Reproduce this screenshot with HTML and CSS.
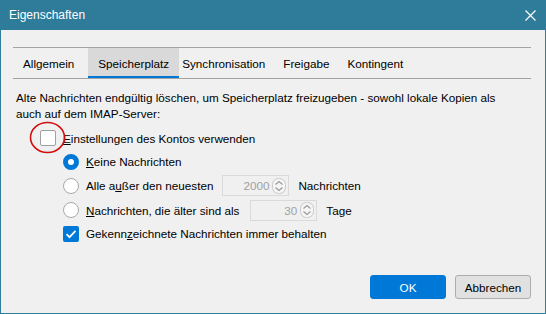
FILE: index.html
```html
<!DOCTYPE html>
<html lang="de">
  <head>
    <meta charset="UTF-8" />
    <title>Eigenschaften</title>
    <link rel="stylesheet" href="styles.css">
  </head>
  <body>
    <div class="window">
      <div class="titlebar">
        <span class="title">Eigenschaften</span>
        <svg class="close" width="11" height="11" viewBox="0 0 11 11">
          <path d="M0.5 0.5 L10.5 10.5 M10.5 0.5 L0.5 10.5" stroke="#fff" stroke-width="1.2" fill="none" />
        </svg>
      </div>
      <div class="content">
        <div class="tabs">
          <div class="tab">Allgemein</div>
          <div class="tab active">Speicherplatz</div>
          <div class="tab">Synchronisation</div>
          <div class="tab">Freigabe</div>
          <div class="tab">Kontingent</div>
        </div>

        <p class="desc">Alte Nachrichten endgültig löschen, um Speicherplatz freizugeben - sowohl lokale Kopien als<br>auch auf dem IMAP-Server:</p>

        <div class="options">
          <div class="row row-account">
            <span class="checkbox"></span>
            <span class="label"><u>E</u>instellungen des Kontos verwenden</span>
            <svg class="marker" width="37" height="33" viewBox="0 0 37 33">
              <ellipse cx="18.5" cy="16.5" rx="17" ry="15" stroke="#d20f0f" stroke-width="1.6" fill="none" />
            </svg>
          </div>
          <div class="row row-sub">
            <span class="radio checked"></span>
            <span class="label"><u>K</u>eine Nachrichten</span>
          </div>
          <div class="row row-sub row-spin">
            <span class="radio"></span>
            <span class="label">Alle a<u>u</u>ßer den neuesten</span>
            <div class="spin spin-count">
              <span class="value">2000</span>
              <svg class="arrows" width="14" height="16" viewBox="0 0 14 16">
                <rect x="0.5" y="0.5" width="13" height="15" rx="6" fill="#f5f5f5" stroke="#c8c8c8" />
                <path d="M3.5 6.5 L7 3.5 L10.5 6.5 M3.5 9.5 L7 12.5 L10.5 9.5" stroke="#9a9a9a" stroke-width="1.2" fill="none" />
              </svg>
            </div>
            <span class="label">Nachrichten</span>
          </div>
          <div class="row row-sub row-spin">
            <span class="radio"></span>
            <span class="label"><u>N</u>achrichten, die älter sind als</span>
            <div class="spin spin-days">
              <span class="value">30</span>
              <svg class="arrows" width="14" height="16" viewBox="0 0 14 16">
                <rect x="0.5" y="0.5" width="13" height="15" rx="6" fill="#f5f5f5" stroke="#c8c8c8" />
                <path d="M3.5 6.5 L7 3.5 L10.5 6.5 M3.5 9.5 L7 12.5 L10.5 9.5" stroke="#9a9a9a" stroke-width="1.2" fill="none" />
              </svg>
            </div>
            <span class="label">Tage</span>
          </div>
          <div class="row row-sub">
            <span class="checkbox checked">
              <svg width="16" height="16" viewBox="0 0 16 16">
                <path d="M3.5 8.2 L6.5 11.2 L12.5 4.8" stroke="#fff" stroke-width="1.7" fill="none" />
              </svg>
            </span>
            <span class="label">Gekenn<u>z</u>eichnete Nachrichten immer behalten</span>
          </div>
        </div>

        <div class="buttons">
          <button class="btn primary">OK</button>
          <button class="btn">Abbrechen</button>
        </div>
      </div>
    </div>
  </body>
</html>
```

FILE: styles.css
```css
body {
  margin: 0;
  padding: 0;
  font-family: "Liberation Sans", Arial, sans-serif;
  font-size: 11.7px;
  color: #000;
  background-color: #f0f0f0;
}
.window {
  width: 546px;
  height: 314px;
  box-sizing: border-box;
  border: 1px solid #2e7b9a;
  border-top: none;
  display: flex;
  flex-direction: column;
  background-color: #f0f0f0;
}
.titlebar {
  height: 30px;
  margin: 0 -1px;
  background-color: #2e7b9a;
  color: #fff;
  display: flex;
  align-items: center;
  justify-content: space-between;
  padding: 0 10px 0 9px;
  font-size: 12px;
}
.close {
  margin-top: 1px;
}
.content {
  flex: 1;
  display: flex;
  flex-direction: column;
  padding: 17px 14px 14px 12px;
}
.tabs {
  display: flex;
  height: 30px;
  border-top: 1px solid #a3a3a3;
  border-bottom: 1px solid #a3a3a3;
  padding-left: 1px;
}
.tab {
  display: flex;
  align-items: center;
  padding: 0 9px 0 9px;
  height: 30px;
  box-sizing: border-box;
}
.tab.active {
  background-color: #d9d9d9;
  border-bottom: 2px solid #0078d7;
  padding: 2px 10px 0 10px;
  margin: 0 -6px 0 5px;
}
.desc {
  margin: 11px 0 0 3px;
  line-height: 16px;
}
.options {
  display: flex;
  flex-direction: column;
  margin-top: 4px;
}
.row {
  display: flex;
  align-items: center;
  height: 23px;
}
.row-account {
  position: relative;
  height: 24px;
  padding-left: 27px;
}
.row-sub {
  padding-left: 50px;
}
.row-spin {
  height: 25px;
}
.row-spin + .row-spin {
  height: 24px;
}
.marker {
  position: absolute;
  left: 16px;
  top: -5px;
}
.checkbox {
  width: 16px;
  height: 16px;
  box-sizing: border-box;
  border: 1px solid #a0a0a0;
  border-radius: 2px;
  background-color: #fff;
  margin-right: 7px;
  flex-shrink: 0;
}
.checkbox.checked {
  border: none;
  background-color: #0078d7;
}
.checkbox svg {
  display: block;
}
.radio {
  width: 16px;
  height: 16px;
  box-sizing: border-box;
  border: 1px solid #a8a8a8;
  border-radius: 50%;
  background-color: #fff;
  margin-right: 7px;
  flex-shrink: 0;
}
.radio.checked {
  border: 5px solid #0078d7;
}
.spin {
  display: flex;
  align-items: center;
  justify-content: flex-end;
  height: 21px;
  box-sizing: border-box;
  border: 1px solid #dadada;
  background-color: #f0f0f0;
  padding-right: 2px;
  color: #a0a0a0;
  margin-right: 9px;
}
.spin .value {
  margin-right: 3px;
}
.spin .arrows {
  display: block;
}
.spin-count {
  width: 67px;
  margin-left: 9px;
}
.spin-days {
  width: 67px;
  margin-left: 11px;
}
.buttons {
  margin-top: auto;
  display: flex;
  justify-content: flex-end;
  gap: 9px;
}
.btn {
  font-family: "Liberation Sans", Arial, sans-serif;
  font-size: 11.7px;
  height: 24px;
  width: 76px;
  border: 1px solid #adadad;
  border-radius: 3px;
  background-color: #e1e1e1;
  color: #000;
  padding: 0;
}
.btn.primary {
  background-color: #0078d7;
  border-color: #0078d7;
  color: #fff;
}
```
